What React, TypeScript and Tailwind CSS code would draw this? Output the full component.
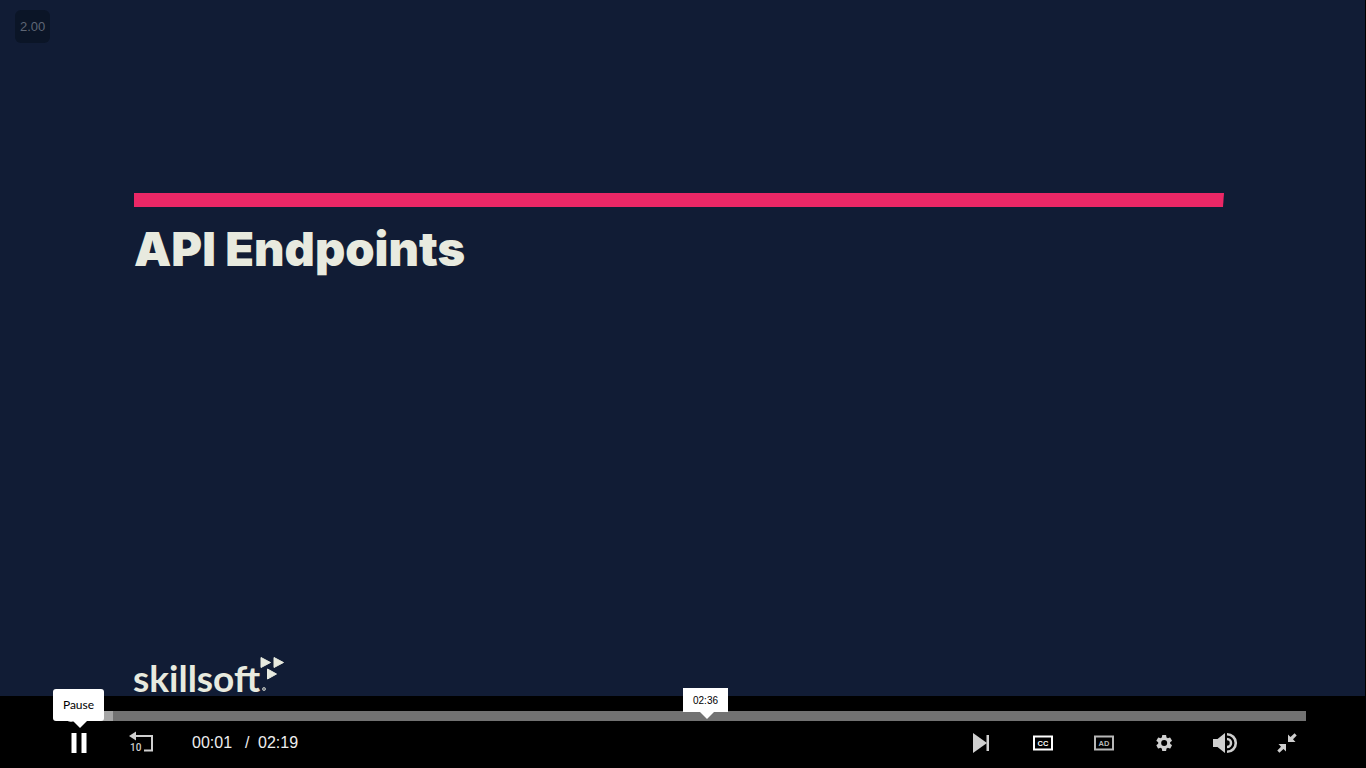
import type { ReactNode } from "react";

const tools = "flex h-11 items-center justify-center text-[#cfcfcf]";

function ToolButton({ label, className, children }: { label: string; className: string; children: ReactNode }) {
  return (
    <button type="button" aria-label={label} className={`${tools} ${className}`}>
      {children}
    </button>
  );
}

function PauseIcon() {
  return (
    <svg width="16" height="20" viewBox="0 0 16 20" fill="#fff">
      <rect x="0.500" width="5" height="20" />
      <rect x="10.500" width="5" height="20" />
    </svg>
  );
}

function RewindIcon() {
  return (
    <svg width="26" height="24" viewBox="0 0 26 24" fill="none">
      <path d="M7 5H24V19.500H16" stroke="currentColor" strokeWidth="2" />
      <path d="M1 5L8 0.500V9.500Z" fill="currentColor" />
      <text x="2" y="20" fontSize="10" className="fill-current font-['Roboto',sans-serif]" fontWeight="500">
        10
      </text>
    </svg>
  );
}

function NextIcon() {
  return (
    <svg width="18" height="20" viewBox="0 0 18 20" fill="currentColor">
      <path d="M0 0L14 10L0 20Z" />
      <rect x="13.500" y="2" width="2.500" height="16" />
    </svg>
  );
}

function BoxIcon({ text, bright }: { text: string; bright?: boolean }) {
  return (
    <svg width="20" height="16" viewBox="0 0 20 16" className={bright ? "text-white" : "text-[#b8b8b8]"}>
      <rect x="1" y="1.500" width="18" height="13" fill="none" stroke="currentColor" strokeWidth="2" />
      <text
        x="10"
        y="11"
        textAnchor="middle"
        fontSize="7.5"
        fontWeight="700"
        className="fill-current font-['Liberation_Sans',sans-serif]"
      >
        {text}
      </text>
    </svg>
  );
}

function GearIcon() {
  return (
    <svg width="20" height="20" viewBox="1 0 24 24" fill="currentColor">
      <path d="M19.14 12.94c.04-.3.06-.61.06-.94 0-.32-.02-.64-.07-.94l2.03-1.58a.49.49 0 0 0 .12-.61l-1.92-3.32a.49.49 0 0 0-.59-.22l-2.39.96a7.03 7.03 0 0 0-1.62-.94l-.36-2.54a.48.48 0 0 0-.48-.41h-3.84a.47.47 0 0 0-.47.41l-.36 2.54c-.59.24-1.13.57-1.62.94l-2.39-.96a.48.48 0 0 0-.59.22L2.74 8.87a.47.47 0 0 0 .12.61l2.03 1.58c-.05.3-.09.63-.09.94s.02.64.07.94l-2.03 1.58a.49.49 0 0 0-.12.61l1.92 3.32c.12.22.37.29.59.22l2.39-.96c.5.38 1.03.7 1.62.94l.36 2.54c.05.24.24.41.48.41h3.84c.24 0 .44-.17.47-.41l.36-2.54c.59-.24 1.13-.56 1.62-.94l2.39.96c.22.08.47 0 .59-.22l1.92-3.32a.47.47 0 0 0-.12-.61l-2.01-1.58zM12 15.6A3.6 3.6 0 1 1 12 8.4a3.6 3.6 0 0 1 0 7.2z" />
    </svg>
  );
}

function VolumeIcon() {
  return (
    <svg width="26" height="22" viewBox="0 0 26 22" fill="none">
      <path d="M0 7H4.500L12 1V21L4.500 15H0Z" fill="currentColor" />
      <path d="M14 7A4 4 0 0 1 14 15" stroke="currentColor" strokeWidth="2.5" />
      <path d="M14 2.2A8.8 8.8 0 0 1 14 19.8" stroke="currentColor" strokeWidth="2.6" />
    </svg>
  );
}

function ShrinkIcon() {
  return (
    <svg width="20" height="20" viewBox="0 0 20 20" fill="currentColor">
      <path d="M11 9V1.500L13.500 4L17.600 .300L19.700 2.400L16 6.200L18.500 9Z" />
      <path d="M9 11V18.500L6.500 16L2.400 19.700L.300 17.600L4 13.800L1.500 11Z" />
    </svg>
  );
}

export default function App() {
  return (
    <div className="flex min-h-screen flex-col bg-black font-['Liberation_Sans',sans-serif]">
      <main className="relative mr-px flex flex-1 flex-col bg-[#111c35] pt-[193px] text-[#e8eadf]">
        <div className="absolute left-[15px] top-2.5 rounded-md bg-[#0b1527] px-[5px] py-1.5 text-[13px] leading-[21px] text-[#5e6675]">
          2.00
        </div>
        <div className="ml-[134px] mr-[141px] h-[14px] bg-[#eb2766] [clip-path:polygon(0_0,100%_0,calc(100%-1px)_100%,0_100%)]" />
        <h1 className="ml-[134px] mt-4 font-['Inter',sans-serif] text-[47px] font-black leading-[52px]">
          API Endpoints
        </h1>
        <div className="ml-[133px] mt-auto flex items-end">
          <span className="font-['Lato',sans-serif] text-[37px] font-bold leading-[36px]">skillsoft</span>
          <svg width="26" height="40" viewBox="0 0 26 40" fill="currentColor" stroke="currentColor" strokeLinejoin="round">
            <path d="M1 1.500L10.500 6.500L1 11.500ZM14 1.500L23.500 6.500L14 11.500ZM7.500 13L16.500 18L7.500 23Z" />
            <circle cx="4" cy="33" r="1.500" fillOpacity="0.4" strokeOpacity="0.7" />
          </svg>
        </div>
      </main>

      <footer className="px-12 pb-[3px] pt-[15px]">
        <div className="relative mx-3 flex">
          <input
            type="range"
            aria-label="Seek"
            min="0"
            max="139"
            step="any"
            defaultValue="0.6"
            className="h-2.5 w-full appearance-none bg-[linear-gradient(90deg,#a5a5a5_53px,#727272_53px)] [&::-webkit-slider-thumb]:h-3 [&::-webkit-slider-thumb]:w-3 [&::-webkit-slider-thumb]:appearance-none [&::-webkit-slider-thumb]:rounded-full [&::-webkit-slider-thumb]:bg-[#cccccc]"
          />
          <div className="absolute bottom-[9px] left-1/2 flex h-6 w-[45px] items-center justify-center bg-white text-[10px] text-black">
            02:36
            <svg className="absolute left-[17px] top-6" width="14" height="7" viewBox="0 0 14 7" fill="#fff">
              <path d="M0 0H14L7 7Z" />
            </svg>
          </div>
        </div>
        <div className="flex h-11 items-center">
          <div className="relative">
            <ToolButton label="Pause" className="w-[62px]">
              <PauseIcon />
            </ToolButton>
            <div
              role="tooltip"
              className="absolute bottom-11 left-[5px] flex h-8 w-[51px] items-center justify-center rounded-[3px] bg-white font-['Lato',sans-serif] text-xs text-black"
            >
              Pause
              <svg className="absolute left-5 top-8" width="14" height="7" viewBox="0 0 14 7" fill="#fff">
                <path d="M0 0H14L7 7Z" />
              </svg>
            </div>
          </div>
          <ToolButton label="Rewind 10 seconds" className="w-[62px]">
            <RewindIcon />
          </ToolButton>
          <div className="ml-5 flex whitespace-pre text-base text-[#eeeeee]">
            <span className="w-[53px]">00:01</span>
            <span className="w-[13px]">/</span>
            <span>02:19</span>
          </div>
          <div className="ml-auto mr-px flex">
            <ToolButton label="Next" className="w-[61px]">
              <NextIcon />
            </ToolButton>
            <ToolButton label="Closed captions" className="w-[61px]">
              <BoxIcon text="CC" bright />
            </ToolButton>
            <ToolButton label="Audio description" className="w-[61px]">
              <BoxIcon text="AD" />
            </ToolButton>
            <ToolButton label="Settings" className="w-[61px]">
              <GearIcon />
            </ToolButton>
            <ToolButton label="Volume" className="w-[61px]">
              <VolumeIcon />
            </ToolButton>
            <ToolButton label="Exit full screen" className="w-[61px]">
              <ShrinkIcon />
            </ToolButton>
          </div>
        </div>
      </footer>
    </div>
  );
}
